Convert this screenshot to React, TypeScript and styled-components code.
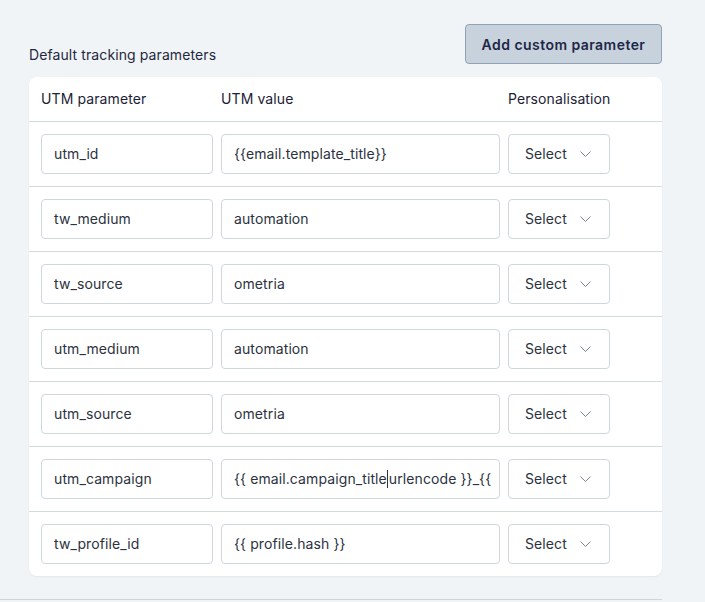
import React from "react";
import styled, { createGlobalStyle } from "styled-components";

const Global = createGlobalStyle`
  html, body { margin: 0; padding: 0; background: #f0f4f7; }
  body { font-family: Inter, "Noto Sans", sans-serif; font-size: 14px; color: #1c2336; }
  * { box-sizing: border-box; }
`;

const Section = styled.section`
  width: 662px;
  padding: 24px 0 23px 29px;
  border-bottom: 1px solid #ccd4dc;
`;

const TopBar = styled.div`
  display: flex;
  justify-content: space-between;
  align-items: flex-end;
  margin-bottom: 13px;
`;

const Title = styled.h2`
  margin: 0;
  font-size: 14px;
  font-weight: 400;
  color: #1f2840;
  line-height: 18px;
  letter-spacing: 0.1px;
`;

const AddButton = styled.button`
  height: 40px;
  width: 197px;
  padding: 0 12px;
  background: #c8d2dc;
  border: 1px solid #8fa2b6;
  border-radius: 4px;
  font-family: Inter, "Noto Sans", sans-serif;
  font-size: 14px;
  font-weight: 600;
  letter-spacing: 0.45px;
  color: #1e2748;
  cursor: pointer;
`;

const Card = styled.div`
  background: #ffffff;
  border-radius: 8px;
  box-shadow: 0 1px 2px rgba(30, 40, 60, 0.06);
`;

const Row = styled.div<{ $head?: boolean }>`
  display: grid;
  grid-template-columns: 172px 279px 102px;
  column-gap: 8px;
  align-items: center;
  padding: ${(p) => (p.$head ? "0 12px" : "12px 12px")};
  height: ${(p) => (p.$head ? "44px" : "65px")};
  border-top: ${(p) => (p.$head ? "none" : "1px solid #d3dae1")};
`;

const HeadCell = styled.div`
  font-size: 14px;
  color: #1c2235;
  line-height: 20px;
  letter-spacing: 0.1px;
`;

const Field = styled.div`
  height: 40px;
  display: flex;
  align-items: center;
  padding: 0 12px 1px;
  border: 1px solid #cfd6de;
  border-radius: 4px;
  background: #fff;
  font-size: 14px;
  color: #2c3240;
  letter-spacing: 0.1px;
  white-space: nowrap;
  overflow: hidden;
`;

const FieldText = styled.span`
  white-space: nowrap;
  line-height: 20px;
`;

const Caret = styled.span`
  display: inline-block;
  width: 1px;
  height: 18px;
  margin: 0 1px 0 0;
  vertical-align: -4px;
  background: #2c3240;
`;

const SelectBox = styled.div`
  height: 40px;
  display: flex;
  align-items: center;
  gap: 13px;
  padding: 0 16px 1px;
  border: 1px solid #cfd6de;
  border-radius: 4px;
  background: #fff;
  font-size: 14px;
  color: #2c3240;
  letter-spacing: 0.1px;
`;

const Chevron = () => (
  <svg width="11" height="6" viewBox="0 0 11 6" fill="none">
    <path d="M0.5 0.5 L5.5 5.5 L10.5 0.5" stroke="#7a8390" strokeWidth="1" />
  </svg>
);

const rows: { key: string; value: React.ReactNode }[] = [
  { key: "utm_id", value: "{{email.template_title}}" },
  { key: "tw_medium", value: "automation" },
  { key: "tw_source", value: "ometria" },
  { key: "utm_medium", value: "automation" },
  { key: "utm_source", value: "ometria" },
  {
    key: "utm_campaign",
    value: (
      <>
        {"{{ email.campaign_title"}
        <Caret />
        {"urlencode }}_{{"}
      </>
    ),
  },
  { key: "tw_profile_id", value: "{{ profile.hash }}" },
];

export default function App() {
  return (
    <>
      <Global />
      <Section>
        <TopBar>
          <Title>Default tracking parameters</Title>
          <AddButton>Add custom parameter</AddButton>
        </TopBar>
        <Card>
          <Row $head>
            <HeadCell>UTM parameter</HeadCell>
            <HeadCell>UTM value</HeadCell>
            <HeadCell>Personalisation</HeadCell>
          </Row>
          {rows.map((r) => (
            <Row key={r.key}>
              <Field>
                <FieldText>{r.key}</FieldText>
              </Field>
              <Field>
                <FieldText>{r.value}</FieldText>
              </Field>
              <SelectBox>
                Select
                <Chevron />
              </SelectBox>
            </Row>
          ))}
        </Card>
      </Section>
    </>
  );
}
